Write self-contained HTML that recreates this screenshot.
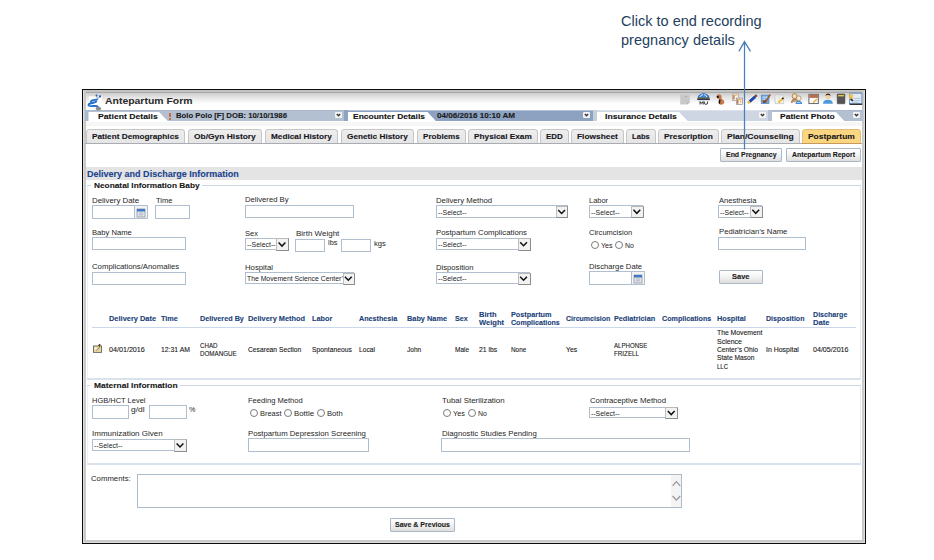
<!DOCTYPE html>
<html><head><meta charset="utf-8"><style>
html,body{margin:0;padding:0;background:#fff;width:934px;height:560px;overflow:hidden;position:relative}
.a{position:absolute;box-sizing:content-box}
.t{position:absolute;white-space:nowrap;line-height:1;font-family:'Liberation Sans', sans-serif;transform-origin:0 0}
.s{-webkit-text-stroke:0.1px currentColor}
svg.a{overflow:visible}
</style></head><body>
<div class="t" style="transform:scaleX(1.0246);left:621.40px;top:14.28px;font-size:14.2px;font-weight:normal;color:#243f60;">Click to end recording</div>
<div class="t" style="transform:scaleX(1.0241);left:621.40px;top:33.28px;font-size:14.2px;font-weight:normal;color:#243f60;">pregnancy details</div>
<div class="a" style="left:82px;top:89px;width:784px;height:455px;background:#0c0c0c;"></div>
<div class="a" style="left:83px;top:90px;width:782px;height:453px;background:#dedede;"></div>
<div class="a" style="left:84px;top:90px;width:780px;height:452px;background:#c9c9c9;"></div>
<div class="a" style="left:86px;top:90px;width:776px;height:450px;background:#fff;"></div>
<div class="a" style="left:86px;top:90px;width:776px;height:18px;background:linear-gradient(#c6c6c6 0px,#c2c2c2 1.5px,#a9a9a9 2.5px,#d0d0d0 3.5px,#e2e2e2 7px,#f4f4f4 11px,#fff 14px);"></div>
<div class="t" style="transform:scaleX(1.1352);left:105.00px;top:97.21px;font-size:9.2px;font-weight:bold;color:#2a2a2a;">Antepartum Form</div>
<div class="a" style="left:85px;top:110px;width:262px;height:10.5px;background:#b3c0d2;border-top:1px solid #aab8ca;box-sizing:border-box;"></div>
<div class="a" style="left:85px;top:110px;width:3.5px;height:10.5px;background:#a9bad3;"></div>
<div class="a" style="left:344px;top:110px;width:4px;height:10.5px;background:#8fa3c0;"></div>
<div class="a" style="left:348px;top:110px;width:245px;height:10.5px;background:#8da2c1;border-top:1px solid #b5c3d6;box-sizing:border-box;"></div>
<div class="a" style="left:593px;top:110px;width:4px;height:10.5px;background:#c5cfdc;"></div>
<div class="a" style="left:597px;top:110px;width:171px;height:10.5px;background:#cdd6e2;border-top:1px solid #dde3ea;box-sizing:border-box;"></div>
<div class="a" style="left:768px;top:110px;width:4px;height:10.5px;background:#b4c2d4;"></div>
<div class="a" style="left:772px;top:110px;width:91px;height:10.5px;background:#b2c0d2;border-top:1px solid #aab8ca;box-sizing:border-box;"></div>
<svg class="a" style="left:0;top:0" width="934" height="130"><polygon points="88.5,112 159,112 168,121.2 88.5,121.2" fill="#fff"/></svg>
<svg class="a" style="left:0;top:0" width="934" height="130"><polygon points="348,112 427.5,112 436,121.2 348,121.2" fill="#fff"/></svg>
<svg class="a" style="left:0;top:0" width="934" height="130"><polygon points="597,112 679,112 688,121.2 597,121.2" fill="#fff"/></svg>
<svg class="a" style="left:0;top:0" width="934" height="130"><polygon points="772,112 836,112 844.5,121.2 772,121.2" fill="#fff"/></svg>
<div class="t s" style="transform:scaleX(1.1110);left:97.50px;top:112.90px;font-size:7.8px;font-weight:bold;color:#111;">Patient Details</div>
<div class="t s" style="transform:scaleX(1.0860);left:353.00px;top:112.90px;font-size:7.8px;font-weight:bold;color:#111;">Encounter Details</div>
<div class="t s" style="transform:scaleX(1.1134);left:604.60px;top:112.90px;font-size:7.8px;font-weight:bold;color:#111;">Insurance Details</div>
<div class="t s" style="transform:scaleX(1.0905);left:780.00px;top:112.90px;font-size:7.8px;font-weight:bold;color:#111;">Patient Photo</div>
<div class="t s" style="transform:scaleX(1.0609);left:176.00px;top:112.02px;font-size:7.3px;font-weight:bold;color:#1a1a1a;">Bolo Polo [F] DOB: 10/10/1986</div>
<div class="t s" style="transform:scaleX(1.1091);left:437.00px;top:112.02px;font-size:7.3px;font-weight:bold;color:#1a1a1a;">04/06/2016 10:10 AM</div>
<div class="a" style="left:169.2px;top:112.5px;width:1.6px;height:4.5px;background:#d06a30;"></div>
<div class="a" style="left:169.2px;top:118px;width:1.6px;height:1.5px;background:#d06a30;"></div>
<div class="a" style="left:335px;top:112px;width:7px;height:6px;background:#f4f4f4;border-radius:1px"></div>
<svg class="a" style="left:335px;top:112px" width="7" height="6"><path d="M1.8 2 L3.5 3.8 L5.2 2" stroke="#333" stroke-width="1.3" fill="none"/></svg>
<div class="a" style="left:583px;top:112px;width:7px;height:6px;background:#f4f4f4;border-radius:1px"></div>
<svg class="a" style="left:583px;top:112px" width="7" height="6"><path d="M1.8 2 L3.5 3.8 L5.2 2" stroke="#333" stroke-width="1.3" fill="none"/></svg>
<div class="a" style="left:759px;top:112px;width:7px;height:6px;background:#f4f4f4;border-radius:1px"></div>
<svg class="a" style="left:759px;top:112px" width="7" height="6"><path d="M1.8 2 L3.5 3.8 L5.2 2" stroke="#333" stroke-width="1.3" fill="none"/></svg>
<div class="a" style="left:853px;top:112px;width:7px;height:6px;background:#f4f4f4;border-radius:1px"></div>
<svg class="a" style="left:853px;top:112px" width="7" height="6"><path d="M1.8 2 L3.5 3.8 L5.2 2" stroke="#333" stroke-width="1.3" fill="none"/></svg>
<div class="a" style="left:86px;top:121.6px;width:776px;height:4px;background:#f6f6f6;"></div>
<div class="a" style="left:86px;top:129px;width:97px;height:14px;background:linear-gradient(#eeeeee,#e4e4e4);border:1px solid #c6c6c6;border-bottom:none;border-radius:3.5px 3.5px 0 0;"></div>
<div class="t s" style="transform:scaleX(1.0543);left:92.10px;top:133.20px;font-size:7.8px;font-weight:bold;color:#15151c;">Patient Demographics</div>
<div class="a" style="left:188px;top:129px;width:72px;height:14px;background:linear-gradient(#eeeeee,#e4e4e4);border:1px solid #c6c6c6;border-bottom:none;border-radius:3.5px 3.5px 0 0;"></div>
<div class="t s" style="transform:scaleX(1.0807);left:194.10px;top:133.20px;font-size:7.8px;font-weight:bold;color:#15151c;">Ob/Gyn History</div>
<div class="a" style="left:265px;top:129px;width:71px;height:14px;background:linear-gradient(#eeeeee,#e4e4e4);border:1px solid #c6c6c6;border-bottom:none;border-radius:3.5px 3.5px 0 0;"></div>
<div class="t s" style="transform:scaleX(1.0548);left:271.10px;top:133.20px;font-size:7.8px;font-weight:bold;color:#15151c;">Medical History</div>
<div class="a" style="left:341px;top:129px;width:71px;height:14px;background:linear-gradient(#eeeeee,#e4e4e4);border:1px solid #c6c6c6;border-bottom:none;border-radius:3.5px 3.5px 0 0;"></div>
<div class="t s" style="transform:scaleX(1.0548);left:347.10px;top:133.20px;font-size:7.8px;font-weight:bold;color:#15151c;">Genetic History</div>
<div class="a" style="left:417px;top:129px;width:47px;height:14px;background:linear-gradient(#eeeeee,#e4e4e4);border:1px solid #c6c6c6;border-bottom:none;border-radius:3.5px 3.5px 0 0;"></div>
<div class="t s" style="transform:scaleX(1.0353);left:423.10px;top:133.20px;font-size:7.8px;font-weight:bold;color:#15151c;">Problems</div>
<div class="a" style="left:468px;top:129px;width:68px;height:14px;background:linear-gradient(#eeeeee,#e4e4e4);border:1px solid #c6c6c6;border-bottom:none;border-radius:3.5px 3.5px 0 0;"></div>
<div class="t s" style="transform:scaleX(1.0581);left:474.10px;top:133.20px;font-size:7.8px;font-weight:bold;color:#15151c;">Physical Exam</div>
<div class="a" style="left:540px;top:129px;width:27px;height:14px;background:linear-gradient(#eeeeee,#e4e4e4);border:1px solid #c6c6c6;border-bottom:none;border-radius:3.5px 3.5px 0 0;"></div>
<div class="t s" style="transform:scaleX(1.0201);left:546.10px;top:133.20px;font-size:7.8px;font-weight:bold;color:#15151c;">EDD</div>
<div class="a" style="left:571px;top:129px;width:51px;height:14px;background:linear-gradient(#eeeeee,#e4e4e4);border:1px solid #c6c6c6;border-bottom:none;border-radius:3.5px 3.5px 0 0;"></div>
<div class="t s" style="transform:scaleX(1.0702);left:577.10px;top:133.20px;font-size:7.8px;font-weight:bold;color:#15151c;">Flowsheet</div>
<div class="a" style="left:626px;top:129px;width:28px;height:14px;background:linear-gradient(#eeeeee,#e4e4e4);border:1px solid #c6c6c6;border-bottom:none;border-radius:3.5px 3.5px 0 0;"></div>
<div class="t s" style="transform:scaleX(0.9779);left:632.10px;top:133.20px;font-size:7.8px;font-weight:bold;color:#15151c;">Labs</div>
<div class="a" style="left:658px;top:129px;width:59px;height:14px;background:linear-gradient(#eeeeee,#e4e4e4);border:1px solid #c6c6c6;border-bottom:none;border-radius:3.5px 3.5px 0 0;"></div>
<div class="t s" style="transform:scaleX(1.0725);left:664.10px;top:133.20px;font-size:7.8px;font-weight:bold;color:#15151c;">Prescription</div>
<div class="a" style="left:721px;top:129px;width:77px;height:14px;background:linear-gradient(#eeeeee,#e4e4e4);border:1px solid #c6c6c6;border-bottom:none;border-radius:3.5px 3.5px 0 0;"></div>
<div class="t s" style="transform:scaleX(1.0934);left:727.10px;top:133.20px;font-size:7.8px;font-weight:bold;color:#15151c;">Plan/Counseling</div>
<div class="a" style="left:802px;top:129px;width:57px;height:14px;background:#fbd680;border:1px solid #e0bf7c;border-bottom:none;border-radius:3.5px 3.5px 0 0;"></div>
<div class="t s" style="transform:scaleX(1.0801);left:808.10px;top:133.20px;font-size:7.8px;font-weight:bold;color:#15151c;">Postpartum</div>
<div class="a" style="left:85px;top:143px;width:777px;height:1px;background:#a9adb3;"></div>
<div class="a" style="left:802px;top:143px;width:59px;height:1px;background:#c99a5c;"></div>
<div class="a" style="left:720.3px;top:148.3px;width:60.10000000000002px;height:12.0px;border:1px solid #a9b8c8;border-radius:1px;background:linear-gradient(#ffffff 0%,#f4f4f4 45%,#dedede 100%);"></div>
<div class="t s" style="transform:scaleX(0.9384);left:726.10px;top:151.03px;font-size:7.4px;font-weight:bold;color:#1a1a1a;">End Pregnancy</div>
<div class="a" style="left:786px;top:148.3px;width:73px;height:12.0px;border:1px solid #a9b8c8;border-radius:1px;background:linear-gradient(#ffffff 0%,#f4f4f4 45%,#dedede 100%);"></div>
<div class="t s" style="transform:scaleX(0.9355);left:792.00px;top:151.03px;font-size:7.4px;font-weight:bold;color:#1a1a1a;">Antepartum Report</div>
<div class="a" style="left:86px;top:167.4px;width:776px;height:12.5px;background:#e4e4e4;"></div>
<div class="t s" style="transform:scaleX(1.0248);left:87.00px;top:170.05px;font-size:8.8px;font-weight:bold;color:#1a428e;">Delivery and Discharge Information</div>
<div class="a" style="left:87px;top:185px;width:1px;height:193px;background:#eef2f7;"></div>
<div class="a" style="left:860px;top:185px;width:1px;height:193px;background:#e3eaf2;"></div>
<div class="a" style="left:87px;top:378px;width:774px;height:1.5px;background:#dae3ec;"></div>
<div class="a" style="left:87px;top:185px;width:4px;height:1px;background:#ccd8e5;"></div>
<div class="a" style="left:201.5px;top:185px;width:659.5px;height:1px;background:#ccd8e5;"></div>
<div class="t s" style="transform:scaleX(1.0254);left:93.70px;top:181.54px;font-size:8.1px;font-weight:bold;color:#161616;">Neonatal Information Baby</div>
<div class="t" style="transform:scaleX(1.0065);left:92.30px;top:197.40px;font-size:7.8px;font-weight:normal;color:#262626;">Delivery Date</div>
<div class="t" style="transform:scaleX(0.9679);left:155.50px;top:197.40px;font-size:7.8px;font-weight:normal;color:#262626;">Time</div>
<div class="t" style="transform:scaleX(0.9864);left:245.00px;top:196.10px;font-size:7.8px;font-weight:normal;color:#262626;">Delivered By</div>
<div class="t" style="transform:scaleX(0.9974);left:436.30px;top:197.30px;font-size:7.8px;font-weight:normal;color:#262626;">Delivery Method</div>
<div class="t" style="transform:scaleX(0.9572);left:588.90px;top:197.30px;font-size:7.8px;font-weight:normal;color:#262626;">Labor</div>
<div class="t" style="transform:scaleX(0.9695);left:718.60px;top:197.30px;font-size:7.8px;font-weight:normal;color:#262626;">Anesthesia</div>
<div class="a" style="left:91.6px;top:205.1px;width:41.80000000000001px;height:11.800000000000011px;border:1px solid #b0bfcf;border-right:none;background:#fff;"></div>
<div class="a" style="left:134.4px;top:205.1px;width:11.899999999999977px;height:11.800000000000011px;border:1px solid #b0bfcf;background:#f2f3f5;"></div>
<svg class="a" style="left:136.35px;top:207.60px" width="10" height="10"><rect x="1" y="1" width="8" height="8" fill="#e6e8ec" stroke="#8d97a5" stroke-width="0.8"/><rect x="1" y="1" width="8" height="2.5" fill="#3f78c4"/><path d="M2.5 5 H7.5 M2.5 6.6 H7.5 M4.2 4 V8.5 M5.9 4 V8.5" stroke="#b0b6bf" stroke-width="0.6"/></svg>
<div class="a" style="left:155.1px;top:205.4px;width:33.19999999999999px;height:11.699999999999989px;border:1px solid #b0bfcf;background:#fff;"></div>
<div class="a" style="left:244.6px;top:204.6px;width:107.30000000000004px;height:11.800000000000011px;border:1px solid #b0bfcf;background:#fff;"></div>
<div class="a" style="left:435.6px;top:205.2px;width:130.39999999999998px;height:10.599999999999994px;border:1px solid #b0bfcf;background:#fff;"></div>
<div class="a" style="left:555.6px;top:205.7px;width:10.899999999999977px;height:10.599999999999994px;border:1px solid #8c8c8c;border-top-color:#b9b9b9;border-left-color:#bdbdbd;background:#f2f2f2;"></div>
<svg class="a" style="left:0;top:0;overflow:visible" width="1" height="1"><path d="M558.20 209.90 L561.60 213.40 L565.00 209.90" stroke="#111" stroke-width="1.5" fill="none"/></svg>
<div class="t" style="transform:scaleX(0.9378);left:437.50px;top:208.64px;font-size:7.4px;font-weight:normal;color:#222;">--Select--</div>
<div class="a" style="left:588.6px;top:205.2px;width:52.700000000000045px;height:10.400000000000006px;border:1px solid #b0bfcf;background:#fff;"></div>
<div class="a" style="left:630.8000000000001px;top:205.7px;width:11.0px;height:10.400000000000006px;border:1px solid #8c8c8c;border-top-color:#b9b9b9;border-left-color:#bdbdbd;background:#f2f2f2;"></div>
<svg class="a" style="left:0;top:0;overflow:visible" width="1" height="1"><path d="M633.45 209.80 L636.85 213.30 L640.25 209.80" stroke="#111" stroke-width="1.5" fill="none"/></svg>
<div class="t" style="transform:scaleX(0.9378);left:590.50px;top:208.54px;font-size:7.4px;font-weight:normal;color:#222;">--Select--</div>
<div class="a" style="left:718.2px;top:205.2px;width:42.10000000000002px;height:10.400000000000006px;border:1px solid #b0bfcf;background:#fff;"></div>
<div class="a" style="left:749.6px;top:205.7px;width:11.200000000000045px;height:10.400000000000006px;border:1px solid #8c8c8c;border-top-color:#b9b9b9;border-left-color:#bdbdbd;background:#f2f2f2;"></div>
<svg class="a" style="left:0;top:0;overflow:visible" width="1" height="1"><path d="M752.35 209.80 L755.75 213.30 L759.15 209.80" stroke="#111" stroke-width="1.5" fill="none"/></svg>
<div class="t" style="transform:scaleX(0.9378);left:720.10px;top:208.54px;font-size:7.4px;font-weight:normal;color:#222;">--Select--</div>
<div class="t" style="transform:scaleX(0.9767);left:92.30px;top:228.50px;font-size:7.8px;font-weight:normal;color:#262626;">Baby Name</div>
<div class="t" style="transform:scaleX(0.9600);left:245.00px;top:229.90px;font-size:7.8px;font-weight:normal;color:#262626;">Sex</div>
<div class="t" style="transform:scaleX(1.0230);left:295.70px;top:229.90px;font-size:7.8px;font-weight:normal;color:#262626;">Birth Weight</div>
<div class="t" style="transform:scaleX(0.9998);left:436.30px;top:228.80px;font-size:7.8px;font-weight:normal;color:#262626;">Postpartum Complications</div>
<div class="t" style="transform:scaleX(0.9658);left:588.90px;top:228.80px;font-size:7.8px;font-weight:normal;color:#262626;">Circumcision</div>
<div class="t" style="transform:scaleX(0.9884);left:718.60px;top:228.20px;font-size:7.8px;font-weight:normal;color:#262626;">Pediatrician’s Name</div>
<div class="a" style="left:91.6px;top:236.6px;width:92.69999999999999px;height:11.900000000000006px;border:1px solid #b0bfcf;background:#fff;"></div>
<div class="a" style="left:244.6px;top:237.79999999999998px;width:41.60000000000005px;height:10.700000000000017px;border:1px solid #b0bfcf;background:#fff;"></div>
<div class="a" style="left:276.20000000000005px;top:238.29999999999998px;width:10.5px;height:10.700000000000017px;border:1px solid #8c8c8c;border-top-color:#b9b9b9;border-left-color:#bdbdbd;background:#f2f2f2;"></div>
<svg class="a" style="left:0;top:0;overflow:visible" width="1" height="1"><path d="M278.60 242.55 L282.00 246.05 L285.40 242.55" stroke="#111" stroke-width="1.5" fill="none"/></svg>
<div class="t" style="transform:scaleX(0.9378);left:246.50px;top:241.29px;font-size:7.4px;font-weight:normal;color:#222;">--Select--</div>
<div class="a" style="left:295.3px;top:238.6px;width:28.0px;height:11.699999999999989px;border:1px solid #b0bfcf;background:#fff;"></div>
<div class="t" style="transform:scaleX(0.9775);left:328.40px;top:238.97px;font-size:7.6px;font-weight:normal;color:#262626;">lbs</div>
<div class="a" style="left:340.6px;top:238.6px;width:28.30000000000001px;height:11.699999999999989px;border:1px solid #b0bfcf;background:#fff;"></div>
<div class="t" style="transform:scaleX(1.0061);left:373.60px;top:239.77px;font-size:7.6px;font-weight:normal;color:#262626;">kgs</div>
<div class="a" style="left:435.6px;top:237.5px;width:92.39999999999998px;height:10.699999999999989px;border:1px solid #b0bfcf;background:#fff;"></div>
<div class="a" style="left:517.5px;top:238.0px;width:11.0px;height:10.699999999999989px;border:1px solid #8c8c8c;border-top-color:#b9b9b9;border-left-color:#bdbdbd;background:#f2f2f2;"></div>
<svg class="a" style="left:0;top:0;overflow:visible" width="1" height="1"><path d="M520.15 242.25 L523.55 245.75 L526.95 242.25" stroke="#111" stroke-width="1.5" fill="none"/></svg>
<div class="t" style="transform:scaleX(0.9378);left:437.50px;top:240.99px;font-size:7.4px;font-weight:normal;color:#222;">--Select--</div>
<div class="a" style="left:590.5px;top:240.9px;width:6.0px;height:6.0px;border:0.8px solid #7c7c7c;border-radius:50%;background:#fff;"></div>
<div class="t" style="transform:scaleX(0.9362);left:600.90px;top:242.37px;font-size:7.6px;font-weight:normal;color:#262626;">Yes</div>
<div class="a" style="left:615px;top:240.9px;width:6.0px;height:6.0px;border:0.8px solid #7c7c7c;border-radius:50%;background:#fff;"></div>
<div class="t" style="transform:scaleX(0.9158);left:625.00px;top:242.37px;font-size:7.6px;font-weight:normal;color:#262626;">No</div>
<div class="a" style="left:718.2px;top:236.6px;width:85.39999999999998px;height:11.900000000000006px;border:1px solid #b0bfcf;background:#fff;"></div>
<div class="t" style="transform:scaleX(0.9949);left:92.30px;top:263.20px;font-size:7.8px;font-weight:normal;color:#262626;">Complications/Anomalies</div>
<div class="t" style="transform:scaleX(0.9939);left:245.00px;top:264.20px;font-size:7.8px;font-weight:normal;color:#262626;">Hospital</div>
<div class="t" style="transform:scaleX(0.9832);left:436.30px;top:263.80px;font-size:7.8px;font-weight:normal;color:#262626;">Disposition</div>
<div class="t" style="transform:scaleX(0.9879);left:588.90px;top:263.20px;font-size:7.8px;font-weight:normal;color:#262626;">Discharge Date</div>
<div class="a" style="left:91.6px;top:271.6px;width:92.69999999999999px;height:11.699999999999989px;border:1px solid #b0bfcf;background:#fff;"></div>
<div class="a" style="left:244.6px;top:272.1px;width:107.60000000000005px;height:10.300000000000011px;border:1px solid #b0bfcf;background:#fff;"></div>
<div class="a" style="left:342.8px;top:272.6px;width:9.900000000000034px;height:10.300000000000011px;border:1px solid #8c8c8c;border-top-color:#b9b9b9;border-left-color:#bdbdbd;background:#f2f2f2;"></div>
<svg class="a" style="left:0;top:0;overflow:visible" width="1" height="1"><path d="M344.90 276.65 L348.30 280.15 L351.70 276.65" stroke="#111" stroke-width="1.5" fill="none"/></svg>
<div class="t" style="transform:scaleX(0.9249);left:246.50px;top:275.39px;font-size:7.4px;font-weight:normal;color:#222;">The Movement Science Center’</div>
<div class="a" style="left:435.6px;top:272.1px;width:92.39999999999998px;height:10.300000000000011px;border:1px solid #b0bfcf;background:#fff;"></div>
<div class="a" style="left:517.5px;top:272.6px;width:11.0px;height:10.300000000000011px;border:1px solid #8c8c8c;border-top-color:#b9b9b9;border-left-color:#bdbdbd;background:#f2f2f2;"></div>
<svg class="a" style="left:0;top:0;overflow:visible" width="1" height="1"><path d="M520.15 276.65 L523.55 280.15 L526.95 276.65" stroke="#111" stroke-width="1.5" fill="none"/></svg>
<div class="t" style="transform:scaleX(0.9378);left:437.50px;top:275.39px;font-size:7.4px;font-weight:normal;color:#222;">--Select--</div>
<div class="a" style="left:588.6px;top:271.40000000000003px;width:41.60000000000002px;height:11.899999999999977px;border:1px solid #b0bfcf;border-right:none;background:#fff;"></div>
<div class="a" style="left:631.2px;top:271.40000000000003px;width:11.899999999999977px;height:11.899999999999977px;border:1px solid #b0bfcf;background:#f2f3f5;"></div>
<svg class="a" style="left:633.15px;top:273.90px" width="10" height="10"><rect x="1" y="1" width="8" height="8" fill="#e6e8ec" stroke="#8d97a5" stroke-width="0.8"/><rect x="1" y="1" width="8" height="2.5" fill="#3f78c4"/><path d="M2.5 5 H7.5 M2.5 6.6 H7.5 M4.2 4 V8.5 M5.9 4 V8.5" stroke="#b0b6bf" stroke-width="0.6"/></svg>
<div class="a" style="left:718.6px;top:270px;width:42.10000000000002px;height:11.899999999999977px;border:1px solid #a9b8c8;border-radius:1px;background:linear-gradient(#ffffff 0%,#f4f4f4 45%,#dedede 100%);"></div>
<div class="t s" style="transform:scaleX(1.0136);left:731.90px;top:272.68px;font-size:7.4px;font-weight:bold;color:#1a1a1a;">Save</div>
<div class="t s" style="transform:scaleX(1.0055);left:108.60px;top:315.04px;font-size:7.4px;font-weight:bold;color:#203f78;">Delivery Date</div>
<div class="t s" style="transform:scaleX(0.9869);left:160.70px;top:315.04px;font-size:7.4px;font-weight:bold;color:#203f78;">Time</div>
<div class="t s" style="transform:scaleX(0.9803);left:200.30px;top:315.04px;font-size:7.4px;font-weight:bold;color:#203f78;">Delivered By</div>
<div class="t s" style="transform:scaleX(1.0001);left:247.70px;top:315.04px;font-size:7.4px;font-weight:bold;color:#203f78;">Delivery Method</div>
<div class="t s" style="transform:scaleX(0.9887);left:311.50px;top:315.04px;font-size:7.4px;font-weight:bold;color:#203f78;">Labor</div>
<div class="t s" style="transform:scaleX(0.9712);left:359.00px;top:315.04px;font-size:7.4px;font-weight:bold;color:#203f78;">Anesthesia</div>
<div class="t s" style="transform:scaleX(0.9934);left:407.00px;top:315.04px;font-size:7.4px;font-weight:bold;color:#203f78;">Baby Name</div>
<div class="t s" style="transform:scaleX(0.9729);left:454.70px;top:315.04px;font-size:7.4px;font-weight:bold;color:#203f78;">Sex</div>
<div class="t s" style="transform:scaleX(1.0145);left:478.60px;top:310.74px;font-size:7.4px;font-weight:bold;color:#203f78;">Birth</div>
<div class="t s" style="transform:scaleX(1.0204);left:478.60px;top:318.94px;font-size:7.4px;font-weight:bold;color:#203f78;">Weight</div>
<div class="t s" style="transform:scaleX(0.9859);left:510.70px;top:310.74px;font-size:7.4px;font-weight:bold;color:#203f78;">Postpartum</div>
<div class="t s" style="transform:scaleX(0.9583);left:510.70px;top:318.94px;font-size:7.4px;font-weight:bold;color:#203f78;">Complications</div>
<div class="t s" style="transform:scaleX(0.9460);left:566.40px;top:315.04px;font-size:7.4px;font-weight:bold;color:#203f78;">Circumcision</div>
<div class="t s" style="transform:scaleX(0.9808);left:614.10px;top:315.04px;font-size:7.4px;font-weight:bold;color:#203f78;">Pediatrician</div>
<div class="t s" style="transform:scaleX(0.9681);left:661.90px;top:315.04px;font-size:7.4px;font-weight:bold;color:#203f78;">Complications</div>
<div class="t s" style="transform:scaleX(0.9912);left:717.40px;top:315.04px;font-size:7.4px;font-weight:bold;color:#203f78;">Hospital</div>
<div class="t s" style="transform:scaleX(0.9565);left:765.50px;top:315.04px;font-size:7.4px;font-weight:bold;color:#203f78;">Disposition</div>
<div class="t s" style="transform:scaleX(0.9622);left:813.30px;top:310.74px;font-size:7.4px;font-weight:bold;color:#203f78;">Discharge</div>
<div class="t s" style="transform:scaleX(1.0292);left:813.30px;top:318.94px;font-size:7.4px;font-weight:bold;color:#203f78;">Date</div>
<div class="a" style="left:92px;top:327px;width:764.4px;height:1px;background:#c9d8ea;"></div>
<div class="t s" style="transform:scaleX(0.9949);left:108.60px;top:345.61px;font-size:7.2px;font-weight:normal;color:#161616;">04/01/2016</div>
<div class="t s" style="transform:scaleX(0.9514);left:160.70px;top:345.61px;font-size:7.2px;font-weight:normal;color:#161616;">12:31 AM</div>
<div class="t s" style="transform:scaleX(0.8589);left:200.30px;top:342.01px;font-size:7.2px;font-weight:normal;color:#161616;">CHAD</div>
<div class="t s" style="transform:scaleX(0.8667);left:200.30px;top:350.11px;font-size:7.2px;font-weight:normal;color:#161616;">DOMANGUE</div>
<div class="t s" style="transform:scaleX(0.9328);left:247.70px;top:345.61px;font-size:7.2px;font-weight:normal;color:#161616;">Cesarean Section</div>
<div class="t s" style="transform:scaleX(0.9392);left:311.50px;top:345.61px;font-size:7.2px;font-weight:normal;color:#161616;">Spontaneous</div>
<div class="t s" style="transform:scaleX(0.9309);left:359.00px;top:345.61px;font-size:7.2px;font-weight:normal;color:#161616;">Local</div>
<div class="t s" style="transform:scaleX(0.9106);left:407.00px;top:345.61px;font-size:7.2px;font-weight:normal;color:#161616;">John</div>
<div class="t s" style="transform:scaleX(0.9042);left:454.70px;top:345.61px;font-size:7.2px;font-weight:normal;color:#161616;">Male</div>
<div class="t s" style="transform:scaleX(0.9485);left:478.60px;top:345.61px;font-size:7.2px;font-weight:normal;color:#161616;">21 lbs</div>
<div class="t s" style="transform:scaleX(0.8902);left:510.70px;top:345.61px;font-size:7.2px;font-weight:normal;color:#161616;">None</div>
<div class="t s" style="transform:scaleX(0.9545);left:566.40px;top:345.61px;font-size:7.2px;font-weight:normal;color:#161616;">Yes</div>
<div class="t s" style="transform:scaleX(0.8479);left:614.10px;top:342.01px;font-size:7.2px;font-weight:normal;color:#161616;">ALPHONSE</div>
<div class="t s" style="transform:scaleX(0.8691);left:614.10px;top:350.11px;font-size:7.2px;font-weight:normal;color:#161616;">FRIZELL</div>
<div class="t s" style="transform:scaleX(0.9471);left:717.40px;top:329.31px;font-size:7.2px;font-weight:normal;color:#161616;">The Movement</div>
<div class="t s" style="transform:scaleX(0.9774);left:717.40px;top:337.81px;font-size:7.2px;font-weight:normal;color:#161616;">Science</div>
<div class="t s" style="transform:scaleX(0.9298);left:717.40px;top:345.81px;font-size:7.2px;font-weight:normal;color:#161616;">Center’s Ohio</div>
<div class="t s" style="transform:scaleX(0.9292);left:717.40px;top:353.81px;font-size:7.2px;font-weight:normal;color:#161616;">State Mason</div>
<div class="t s" style="transform:scaleX(0.8341);left:717.40px;top:363.01px;font-size:7.2px;font-weight:normal;color:#161616;">LLC</div>
<div class="t s" style="transform:scaleX(0.9656);left:765.50px;top:345.61px;font-size:7.2px;font-weight:normal;color:#161616;">In Hospital</div>
<div class="t s" style="transform:scaleX(0.9865);left:813.30px;top:345.61px;font-size:7.2px;font-weight:normal;color:#161616;">04/05/2016</div>
<svg class="a" style="left:88px;top:338px" width="20" height="20" viewBox="88 338 20 20"><rect x="93.5" y="346" width="8" height="6.4" fill="#eed79a" stroke="#5d6474" stroke-width="0.9"/><circle cx="95.6" cy="348.4" r="1.2" fill="#fff6d8"/><path d="M96.2 350.6 L99.5 347.5" stroke="#6a7a8a" stroke-width="0.9"/><path d="M98.4 347 L100 344.2" stroke="#4a3a30" stroke-width="1.8"/><circle cx="98.4" cy="346.6" r="0.9" fill="#f0c030"/></svg>
<div class="a" style="left:87px;top:384.6px;width:1px;height:78.39999999999998px;background:#eef2f7;"></div>
<div class="a" style="left:860px;top:384.6px;width:1px;height:78.39999999999998px;background:#e3eaf2;"></div>
<div class="a" style="left:87px;top:463px;width:774px;height:1.5px;background:#dae3ec;"></div>
<div class="a" style="left:87px;top:384.6px;width:3px;height:1px;background:#ccd8e5;"></div>
<div class="a" style="left:180px;top:384.6px;width:681px;height:1px;background:#ccd8e5;"></div>
<div class="t s" style="transform:scaleX(1.0444);left:93.60px;top:382.14px;font-size:8.1px;font-weight:bold;color:#161616;">Maternal Information</div>
<div class="t" style="transform:scaleX(0.9594);left:92.00px;top:396.90px;font-size:7.8px;font-weight:normal;color:#262626;">HGB/HCT Level</div>
<div class="a" style="left:91.6px;top:405.0px;width:35.19999999999999px;height:11.800000000000011px;border:1px solid #b0bfcf;background:#fff;"></div>
<div class="t" style="transform:scaleX(1.1184);left:131.00px;top:406.17px;font-size:7.6px;font-weight:normal;color:#262626;">g/dl</div>
<div class="a" style="left:149.4px;top:405.0px;width:35.39999999999998px;height:11.800000000000011px;border:1px solid #b0bfcf;background:#fff;"></div>
<div class="t" style="transform:scaleX(0.9460);left:189.40px;top:406.17px;font-size:7.6px;font-weight:normal;color:#262626;">%</div>
<div class="t" style="transform:scaleX(0.9706);left:248.00px;top:397.40px;font-size:7.8px;font-weight:normal;color:#262626;">Feeding Method</div>
<div class="a" style="left:249.6px;top:408.6px;width:6.0px;height:6.0px;border:0.8px solid #7c7c7c;border-radius:50%;background:#fff;"></div>
<div class="t" style="transform:scaleX(0.9794);left:260.00px;top:410.27px;font-size:7.6px;font-weight:normal;color:#262626;">Breast</div>
<div class="a" style="left:283.7px;top:408.6px;width:6.0px;height:6.0px;border:0.8px solid #7c7c7c;border-radius:50%;background:#fff;"></div>
<div class="t" style="transform:scaleX(1.0298);left:294.30px;top:410.27px;font-size:7.6px;font-weight:normal;color:#262626;">Bottle</div>
<div class="a" style="left:317.2px;top:408.6px;width:6.0px;height:6.0px;border:0.8px solid #7c7c7c;border-radius:50%;background:#fff;"></div>
<div class="t" style="transform:scaleX(0.9984);left:326.80px;top:410.27px;font-size:7.6px;font-weight:normal;color:#262626;">Both</div>
<div class="t" style="transform:scaleX(1.0148);left:441.60px;top:397.40px;font-size:7.8px;font-weight:normal;color:#262626;">Tubal Sterilization</div>
<div class="a" style="left:443px;top:408.6px;width:6.0px;height:6.0px;border:0.8px solid #7c7c7c;border-radius:50%;background:#fff;"></div>
<div class="t" style="transform:scaleX(0.9604);left:453.30px;top:410.27px;font-size:7.6px;font-weight:normal;color:#262626;">Yes</div>
<div class="a" style="left:468px;top:408.6px;width:6.0px;height:6.0px;border:0.8px solid #7c7c7c;border-radius:50%;background:#fff;"></div>
<div class="t" style="transform:scaleX(0.9158);left:477.80px;top:410.27px;font-size:7.6px;font-weight:normal;color:#262626;">No</div>
<div class="t" style="transform:scaleX(0.9963);left:589.80px;top:397.40px;font-size:7.8px;font-weight:normal;color:#262626;">Contraceptive Method</div>
<div class="a" style="left:589.4px;top:406.8px;width:86.0px;height:9.699999999999989px;border:1px solid #b0bfcf;background:#fff;"></div>
<div class="a" style="left:665.4px;top:407.3px;width:10.5px;height:9.699999999999989px;border:1px solid #8c8c8c;border-top-color:#b9b9b9;border-left-color:#bdbdbd;background:#f2f2f2;"></div>
<svg class="a" style="left:0;top:0;overflow:visible" width="1" height="1"><path d="M667.80 411.05 L671.20 414.55 L674.60 411.05" stroke="#111" stroke-width="1.5" fill="none"/></svg>
<div class="t" style="transform:scaleX(0.9378);left:591.30px;top:409.79px;font-size:7.4px;font-weight:normal;color:#222;">--Select--</div>
<div class="t" style="transform:scaleX(1.0260);left:92.00px;top:430.20px;font-size:7.8px;font-weight:normal;color:#262626;">Immunization Given</div>
<div class="a" style="left:91.6px;top:438.70000000000005px;width:92.80000000000001px;height:10.599999999999966px;border:1px solid #b0bfcf;background:#fff;"></div>
<div class="a" style="left:174.0px;top:439.20000000000005px;width:10.900000000000006px;height:10.599999999999966px;border:1px solid #8c8c8c;border-top-color:#b9b9b9;border-left-color:#bdbdbd;background:#f2f2f2;"></div>
<svg class="a" style="left:0;top:0;overflow:visible" width="1" height="1"><path d="M176.60 443.40 L180.00 446.90 L183.40 443.40" stroke="#111" stroke-width="1.5" fill="none"/></svg>
<div class="t" style="transform:scaleX(0.9378);left:93.50px;top:442.14px;font-size:7.4px;font-weight:normal;color:#222;">--Select--</div>
<div class="t" style="transform:scaleX(0.9928);left:248.00px;top:429.60px;font-size:7.8px;font-weight:normal;color:#262626;">Postpartum Depression Screening</div>
<div class="a" style="left:247.6px;top:437.8px;width:119.9px;height:11.800000000000011px;border:1px solid #b0bfcf;background:#fff;"></div>
<div class="t" style="transform:scaleX(0.9931);left:441.60px;top:429.60px;font-size:7.8px;font-weight:normal;color:#262626;">Diagnostic Studies Pending</div>
<div class="a" style="left:441.20000000000005px;top:437.8px;width:246.39999999999998px;height:11.800000000000011px;border:1px solid #b0bfcf;background:#fff;"></div>
<div class="t" style="transform:scaleX(0.9956);left:90.80px;top:474.90px;font-size:7.8px;font-weight:normal;color:#262626;">Comments:</div>
<div class="a" style="left:137px;top:473.6px;width:542.8px;height:32px;border:1px solid #abbccc;background:#fff;"></div>
<div class="a" style="left:671px;top:474.6px;width:10px;height:32px;background:#f4f4f4;"></div>
<svg class="a" style="left:669px;top:478px" width="14" height="26"><path d="M3.6 7.8 L7.4 3.6 L11.2 7.8" stroke="#9c9494" stroke-width="1.2" fill="none"/><path d="M3.6 18 L7.4 22.2 L11.2 18" stroke="#9c9494" stroke-width="1.2" fill="none"/></svg>
<div class="a" style="left:390.3px;top:518px;width:63.0px;height:11.899999999999977px;border:1px solid #a9b8c8;border-radius:1px;background:linear-gradient(#ffffff 0%,#f4f4f4 45%,#dedede 100%);"></div>
<div class="t s" style="transform:scaleX(0.9493);left:395.30px;top:520.68px;font-size:7.4px;font-weight:bold;color:#1a1a1a;">Save &amp; Previous</div>
<svg class="a" style="left:84px;top:90px" width="24" height="22" viewBox="84 90 24 22">
<rect x="88.8" y="96.4" width="13" height="13" fill="#fff"/>
<path d="M96.6 95.8 L97.4 99 L99.8 96.6" stroke="#b0b0b0" stroke-width="1.1" fill="none"/>
<circle cx="96.5" cy="95.5" r="0.95" fill="#1f5fc6"/><circle cx="100" cy="96.4" r="1.15" fill="#1f5fc6"/>
<path d="M97 99.6 C93.6 99.6 90.4 100.8 91 102.2 C91.6 103.2 94.6 102.4 96.2 101.6 M93.6 102.8 C89.6 103.2 87.8 104.4 88.8 105.6 C89.8 106.6 93.2 105.8 95.8 106 C97.4 106.2 98 107 98.2 107.4" stroke="#2470d0" stroke-width="1.9" fill="none" stroke-linecap="round"/>
<ellipse cx="98.4" cy="108.6" rx="2.7" ry="1.9" fill="#8a8a8a"/>
</svg>
<svg class="a" style="left:676px;top:90px" width="190" height="18" viewBox="676 90 190 18">
<!-- gray doc -->
<path d="M680.2 94.6 H689.9 V102 L687.3 104.6 H680.2 Z" fill="#c9c9c9"/><path d="M689.9 102 L687.3 102 L687.3 104.6" fill="#b4b4b4"/><circle cx="686" cy="96.5" r="0.7" fill="#999"/>
<!-- MU dome -->
<path d="M697.1 99.8 A6.45 6.6 0 0 1 710 99.8 Z" fill="#2a5aa0"/>
<path d="M698.2 99 A5.3 5.4 0 0 1 708.9 99 Z" fill="#3f86d8"/>
<path d="M699.8 97 Q701 94.8 703 94.6 M706.9 97 Q706 94.9 704.2 94.6" stroke="#eaf4ff" stroke-width="1" fill="none"/>
<rect x="698" y="97.6" width="11" height="1.6" fill="#6e5a2e"/>
<rect x="697.4" y="99.2" width="12.4" height="0.9" fill="#1a2c4c"/>
<path d="M700.1 104.5 V101.6 L701.6 103.4 L703.1 101.6 V104.5 M704.3 101.6 V103.6 Q705.9 105.2 707.5 103.6 V101.6" stroke="#2e2e2e" stroke-width="1" fill="none"/>
<!-- brown figure -->
<path d="M718.6 94.3 Q721.8 94.4 721.6 97.4 Q721.2 98.6 721.8 99 Q724.6 100.2 724.2 103 Q723.4 105 720.6 104.8 Q718.4 104.4 718.4 102 Q718.4 100.4 719.4 99.4 Q716.4 98.6 716.5 96.6 Q716.8 94.4 718.6 94.3 Z" fill="#c27a4a"/>
<circle cx="717.8" cy="96.9" r="1.1" fill="#111"/><path d="M720 99.6 Q719 101.5 719.6 103.6" stroke="#111" stroke-width="1.5" fill="none"/>
<!-- two docs -->
<rect x="732.6" y="93.9" width="5.8" height="6.5" fill="#fbf3e6" stroke="#a9a9a9" stroke-width="0.8"/><path d="M733.9 95 V99.6" stroke="#b25a2c" stroke-width="1.2"/><path d="M734.6 95.2 H737.2" stroke="#f0b050" stroke-width="1"/>
<rect x="736.5" y="98.1" width="5.9" height="6.4" fill="#fbf3e6" stroke="#999" stroke-width="0.8"/><path d="M737.8 99.2 V103.8" stroke="#b25a2c" stroke-width="1.2"/><path d="M738.5 99.4 H741.4 M740.6 100.4 V102.4" stroke="#e8a050" stroke-width="1"/>
<!-- pencil -->
<path d="M746.6 101.4 L753.6 94.4 L757.2 96.8 L750.2 104.2 Z" fill="#f2f2f2"/>
<path d="M749.6 101.6 L755.2 96.6" stroke="#1f48b0" stroke-width="2.8"/><path d="M747.9 103.1 L749.7 101.5" stroke="#e8b83a" stroke-width="2.4"/><path d="M755.1 96.6 L756.7 95.2" stroke="#7a3a1c" stroke-width="2.2"/>
<!-- checklist -->
<rect x="761.3" y="95.2" width="7.6" height="8.2" fill="#7aa8dc" stroke="#4d86c8" stroke-width="0.8"/><path d="M762.6 97.2 H767.4 M762.6 99.2 H765" stroke="#f0f4fa" stroke-width="0.8"/>
<path d="M765.6 102.2 L770.4 94.4" stroke="#9a5c30" stroke-width="1.5"/><path d="M762.6 100.2 H766.4 L765.6 103 H763.2 Z" fill="#8a4a2a"/>
<!-- doc with pencil -->
<path d="M775 94.9 H781.6 L783.6 96.9 V103.6 H775 Z" fill="#f4f4f4" stroke="#c4c4c4" stroke-width="0.8"/><path d="M776.4 96.4 H781 M776.4 98 H780" stroke="#d8d8d8" stroke-width="0.7"/><path d="M778.4 102.6 L782.4 98.8" stroke="#f0c040" stroke-width="2.2"/><path d="M782.2 99 L783.4 97.8" stroke="#111" stroke-width="1.6"/>
<!-- people -->
<circle cx="794.6" cy="96.2" r="2.5" fill="#f4e0bc" stroke="#9a6a3a" stroke-width="0.8"/><path d="M791.4 103 Q791.2 99.2 794.6 99 Q797 99 797.6 101" fill="#c49a68" stroke="#8a6038" stroke-width="0.6"/>
<circle cx="798.8" cy="98.2" r="2.3" fill="#fbeedc" stroke="#b08a58" stroke-width="0.8"/><path d="M795.6 104 Q795.6 100.8 798.8 100.8 Q802 100.8 802 104 Z" fill="#3d8ad6"/><path d="M797 102.6 H800.6" stroke="#cfe4f8" stroke-width="0.8"/>
<!-- calendar -->
<rect x="808.9" y="94.3" width="9.4" height="9.3" fill="#fafafa" stroke="#5a5a5a" stroke-width="0.9"/><rect x="809.3" y="94.7" width="8.6" height="3.2" fill="#b86c4c"/><path d="M813 102.8 L817 99" stroke="#e8b040" stroke-width="1.5"/>
<!-- person -->
<circle cx="827.9" cy="96.6" r="2.5" fill="#f2cfa0"/><path d="M825.3 96 Q825.5 93.3 828 93.4 Q830.6 93.4 830.5 96 Q829.5 94.8 827.9 94.9 Q826.3 94.8 825.3 96 Z" fill="#3a2a20"/>
<path d="M823 103.8 Q823 99.8 827.9 99.8 Q832.8 99.8 832.8 103.8 Z" fill="#4d9ad8"/>
<!-- calculator -->
<rect x="837.2" y="94" width="7.7" height="9.8" rx="0.6" fill="#555" stroke="#3a3a3a" stroke-width="0.5"/><rect x="838.2" y="94.9" width="5.7" height="1.5" fill="#e7c648"/>
<!-- photo card -->
<rect x="849.5" y="93.2" width="12.4" height="10.6" fill="#e4ebf4" stroke="#4f85c6" stroke-width="0.8"/><rect x="849.6" y="103.6" width="12.6" height="1.4" fill="#333"/>
<path d="M854 98.5 H860.5 M854 100.5 H860.5 M852 102.3 H859" stroke="#9fb4cf" stroke-width="0.7"/>
<path d="M849.5 92.8 L851.2 94.8 L853.6 94.6 L852.6 96.8 L853.6 98.8 L851.4 98.6 L850 100.4 L849.2 98.4" fill="#f0c040"/><path d="M850.6 99 L853 100.8" stroke="#1b2f5a" stroke-width="1.6"/>
</svg>
<svg class="a" style="left:0;top:0;z-index:50" width="934" height="170"><path d="M744.5 149.6 V41.6 M738.9 51.4 L744.5 41.6 L750.5 51.4" stroke="#4a7ebb" stroke-width="1.25" fill="none"/></svg>
</body></html>
